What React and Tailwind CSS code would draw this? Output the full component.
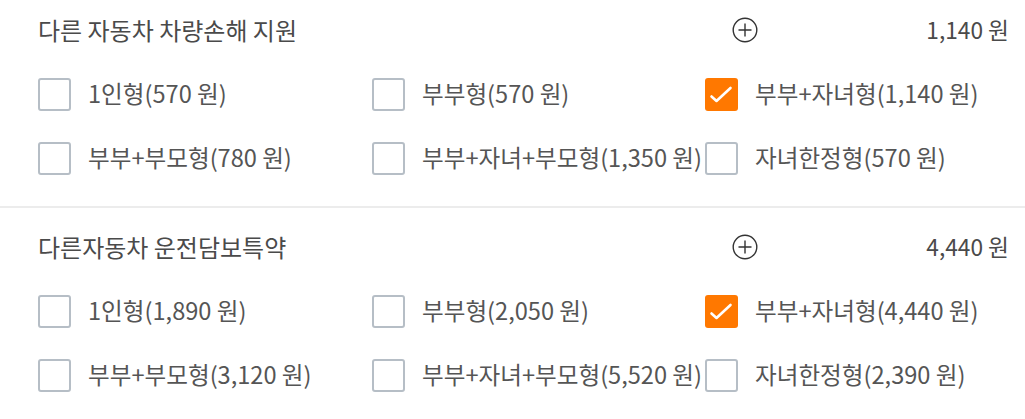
import React from "react";

const sections = [
  {
    title: "다른 자동차 차량손해 지원",
    total: "1,140 원",
    options: [
      ["1인형(570 원)", false],
      ["부부형(570 원)", false],
      ["부부+자녀형(1,140 원)", true],
      ["부부+부모형(780 원)", false],
      ["부부+자녀+부모형(1,350 원)", false],
      ["자녀한정형(570 원)", false],
    ],
  },
  {
    title: "다른자동차 운전담보특약",
    total: "4,440 원",
    options: [
      ["1인형(1,890 원)", false],
      ["부부형(2,050 원)", false],
      ["부부+자녀형(4,440 원)", true],
      ["부부+부모형(3,120 원)", false],
      ["부부+자녀+부모형(5,520 원)", false],
      ["자녀한정형(2,390 원)", false],
    ],
  },
];

function Checkbox({ checked }) {
  if (checked) {
    return (
      <span className="w-[33px] h-[33px] shrink-0 rounded-[3px] bg-[#ff7800] flex items-center justify-center">
        <svg width="33" height="33" viewBox="0 0 33 33" fill="none">
          <path d="M6.5 18.5 L11.5 23 L25.5 10" stroke="#fff" strokeWidth="2.6" strokeLinecap="round" strokeLinejoin="round" />
        </svg>
      </span>
    );
  }
  return <span className="w-[33px] h-[33px] shrink-0 rounded-[3px] border-2 border-[#b6bec6] bg-white" />;
}

function PlusCircle() {
  return (
    <svg width="26" height="26" viewBox="0 0 26 26" fill="none">
      <circle cx="13" cy="13" r="11.8" stroke="#333" strokeWidth="1.4" />
      <path d="M13 6.5 V19.5 M6.5 13 H19.5" stroke="#333" strokeWidth="1.4" />
    </svg>
  );
}

export default function App() {
  return (
    <div className="w-[1025px] h-[419px] overflow-hidden bg-white text-[#555] font-['Noto_Sans_CJK_KR','Noto_Sans',sans-serif]">
      <div className="-mt-[9px]">
        {sections.map((s, i) => (
          <div key={s.title} className={`pl-[38px] pr-[16px] pt-[7px] pb-[16px] ${i > 0 ? "border-t-2 border-[#ececec]" : ""}`}>
            <div className="h-[64px] grid grid-cols-[334px_333px_1fr] items-center">
              <span className="col-span-2 text-[24px] text-[#4a4a4a]">{s.title}</span>
              <div className="flex items-center justify-between">
                <span className="ml-[27px] flex"><PlusCircle /></span>
                <span className="text-[22.7px] text-[#4a4a4a]">{s.total}</span>
              </div>
            </div>
            <div className="grid grid-cols-[334px_333px_1fr]">
              {s.options.map(([label, checked]) => (
                <div key={label} className="h-[64px] flex items-center">
                  <Checkbox checked={checked} />
                  <span className="ml-[17px] text-[23.6px] whitespace-nowrap">{label}</span>
                </div>
              ))}
            </div>
          </div>
        ))}
      </div>
    </div>
  );
}
